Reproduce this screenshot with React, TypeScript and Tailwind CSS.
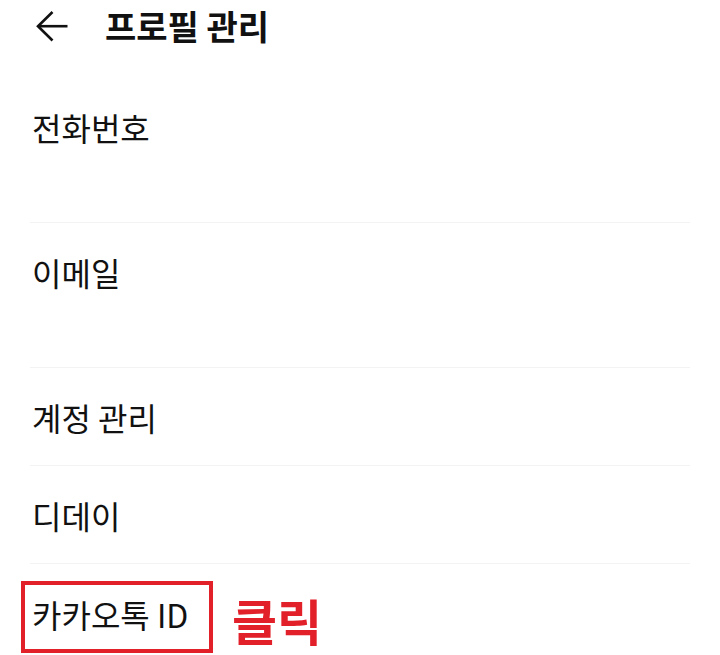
const font = "font-['Noto_Sans_CJK_KR','Noto_Sans',sans-serif]";

type Row = {
  label: string;
  tall?: boolean;
};

const rows: Row[] = [
  { label: "전화번호", tall: true },
  { label: "이메일", tall: true },
  { label: "계정 관리" },
  { label: "디데이" },
];

function BackArrow() {
  return (
    <svg width="32" height="32" viewBox="0 0 32 32" fill="none" stroke="#111" strokeWidth="2.6">
      <path d="M16.5 2 L2 16.2 L16.5 30.5" />
      <path d="M2 16.2 H31.5" />
    </svg>
  );
}

export default function App() {
  return (
    <div className={`h-[655px] w-[720px] overflow-hidden bg-white text-[#111] ${font}`}>
      <header className="flex h-[78px] items-center pb-[26px] pl-[36px]">
        <BackArrow />
        <h1 className="ml-[37px] text-[34px] leading-none font-bold">프로필 관리</h1>
      </header>

      <ul className="px-[30px]">
        {rows.map((row) => (
          <li
            key={row.label}
            className={`border-b border-[#f3f3f3] pt-[33px] pl-[2px] ${row.tall ? "h-[145px]" : "h-[98px]"}`}
          >
            <span className="text-[32px] leading-none">{row.label}</span>
          </li>
        ))}
        <li className="relative pt-[34px] pl-[2px]">
          <span className="text-[32px] leading-none">카카오톡 ID</span>
          {/* highlight box and label */}
          <div className="absolute top-[17px] left-[-9px] h-[72px] w-[192px] border-4 border-[#e2202a]" />
          <span className="absolute top-[31px] left-[202px] text-[49px] leading-none font-bold text-[#e2202a]">
            클릭
          </span>
        </li>
      </ul>
    </div>
  );
}
